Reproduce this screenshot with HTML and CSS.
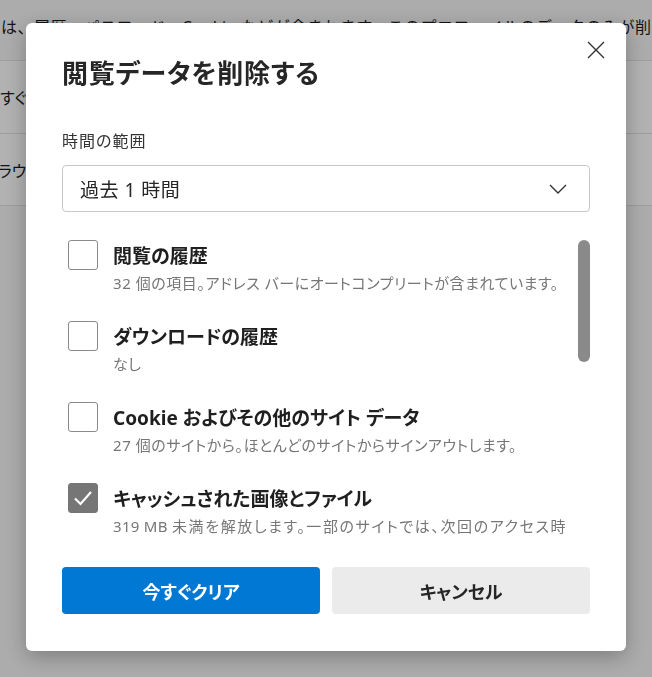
FILE: index.html
```html
<!DOCTYPE html>
<html lang="ja">
<head>
<meta charset="utf-8">
<title>閲覧データを削除する</title>
<link rel="stylesheet" href="styles.css">
</head>
<body>
<div class="page">
  <p class="intro">は、履歴、パスワード、Cookie などが含まれます。このプロファイルのデータのみが削除されます。</p>
  <div class="card">
    <div class="card-row"><span class="row-text">今すぐクリアするデータを選択</span></div>
    <div class="card-row"><span class="row-text">ブラウザーを閉じるたびにクリアするデータを選択</span></div>
  </div>
</div>
<div class="overlay"></div>
<div class="dialog" role="dialog">
  <div class="dlg-header">
    <h1 class="dlg-title">閲覧データを削除する</h1>
    <button class="close-btn" aria-label="閉じる">
      <svg width="18" height="18" viewBox="0 0 18 18"><path d="M1 1 L17 17 M17 1 L1 17" stroke="#333" stroke-width="1.4" fill="none"/></svg>
    </button>
  </div>
  <div class="field-label">時間の範囲</div>
  <div class="select">
    <span>過去 1 時間</span>
    <svg width="18" height="10" viewBox="0 0 18 10"><path d="M1 1 L9 9 L17 1" stroke="#333" stroke-width="1.4" fill="none"/></svg>
  </div>
  <div class="list-wrap">
    <div class="list">
      <div class="item">
        <span class="box"></span>
        <div class="texts">
          <div class="item-title">閲覧の履歴</div>
          <div class="item-desc">32 個の項目。アドレス バーにオートコンプリートが含まれています。</div>
        </div>
      </div>
      <div class="item">
        <span class="box"></span>
        <div class="texts">
          <div class="item-title">ダウンロードの履歴</div>
          <div class="item-desc">なし</div>
        </div>
      </div>
      <div class="item">
        <span class="box"></span>
        <div class="texts">
          <div class="item-title">Cookie およびその他のサイト データ</div>
          <div class="item-desc">27 個のサイトから。ほとんどのサイトからサインアウトします。</div>
        </div>
      </div>
      <div class="item">
        <span class="box checked"><svg width="20" height="16" viewBox="0 0 20 16"><path d="M2 8.5 L7.5 14 L18 2" stroke="#fff" stroke-width="2.2" fill="none"/></svg></span>
        <div class="texts">
          <div class="item-title">キャッシュされた画像とファイル</div>
          <div class="item-desc desc-wide"><span class="latin">319 MB </span>未満を解放します。一部のサイトでは、次回のアクセス時に読み込みが遅くなる可能性があります。</div>
        </div>
      </div>
      <div class="item">
        <span class="box"></span>
        <div class="texts">
          <div class="item-title">パスワード</div>
          <div class="item-desc">なし</div>
        </div>
      </div>
    </div>
    <div class="scroll-track"><div class="scroll-thumb"></div></div>
  </div>
  <div class="actions">
    <button class="btn primary">今すぐクリア</button>
    <button class="btn secondary">キャンセル</button>
  </div>
</div>
</body>
</html>
```
FILE: styles.css
```css
* { box-sizing: border-box; }
html, body {
  margin: 0;
  height: 677px;
  overflow: hidden;
}
body {
  background: #f7f7f7;
  font-family: "Noto Sans", "Noto Sans CJK JP", sans-serif;
  font-feature-settings: "palt";
  color: #262626;
}
.page {
  padding-top: 15px;
  overflow: hidden;
}
.intro {
  margin: 0;
  padding-left: 1px;
  font-size: 16px;
  line-height: 24px;
  letter-spacing: 0.5px;
  white-space: nowrap;
  overflow: hidden;
  font-feature-settings: normal;
  color: #1b1b1b;
}
.card {
  margin-top: 21px;
  margin-left: -20px;
  background: #fff;
  border-top: 1px solid #e3e3e3;
  border-bottom: 1px solid #e3e3e3;
}
.card-row {
  height: 72px;
  display: flex;
  align-items: center;
  padding-left: 4px;
  font-size: 16px;
  white-space: nowrap;
  color: #1b1b1b;
}
.card-row + .card-row { border-top: 1px solid #e3e3e3; }

.overlay {
  position: fixed;
  inset: 0;
  background: rgba(0, 0, 0, 0.3);
}
.dialog {
  position: fixed;
  left: 26px;
  top: 23px;
  width: 600px;
  padding: 32px 36px 37px 36px;
  background: #fff;
  border-radius: 6px;
  box-shadow: 0 6px 22px rgba(0, 0, 0, 0.28);
}
.dlg-header {
  display: flex;
  justify-content: space-between;
  align-items: flex-start;
}
.dlg-title {
  margin: 0;
  font-size: 26px;
  line-height: 36px;
  font-weight: 700;
  letter-spacing: 0.8px;
  color: #262626;
}
.close-btn {
  width: 32px;
  height: 32px;
  margin: -21px -22px 0 0;
  padding: 0;
  border: none;
  background: transparent;
  display: flex;
  align-items: center;
  justify-content: center;
}
.field-label {
  margin-top: 38px;
  font-size: 16px;
  line-height: 24px;
  letter-spacing: 1px;
  color: #333;
}
.select {
  margin-top: 12px;
  height: 47px;
  border: 1px solid #c8c8c8;
  border-radius: 4px;
  display: flex;
  align-items: center;
  justify-content: space-between;
  padding: 0 22px 0 17px;
  font-size: 19px;
  letter-spacing: 0.5px;
  color: #262626;
}
.list-wrap {
  margin-top: 12px;
  height: 315px;
  display: flex;
  overflow: hidden;
}
.list {
  flex: 1;
  min-width: 0;
  padding: 16px 0 0 6px;
  display: flex;
  flex-direction: column;
  gap: 27px;
  overflow: hidden;
}
.item {
  display: flex;
  gap: 15px;
  align-items: flex-start;
}
.box {
  flex: none;
  width: 30px;
  height: 30px;
  border: 1px solid #8a8a8a;
  border-radius: 3px;
  background: #fff;
  display: flex;
  align-items: center;
  justify-content: center;
}
.box.checked {
  background: #767676;
  border-color: #767676;
}
.texts { min-width: 0; }
.item-title {
  font-size: 19px;
  line-height: 32px;
  font-weight: 700;
  color: #1f1f1f;
}
.item-desc {
  font-size: 15px;
  line-height: 22px;
  letter-spacing: 0.55px;
  color: #767676;
}
.item-desc.desc-wide {
  letter-spacing: 1.6px;
}
.item-desc .latin {
  letter-spacing: 0.3px;
}
.scroll-track {
  flex: none;
  width: 12px;
  padding-top: 16px;
}
.scroll-thumb {
  height: 122px;
  background: #8a8a8a;
  border-radius: 6px;
}
.actions {
  margin-top: 28px;
  display: grid;
  grid-template-columns: 1fr 1fr;
  gap: 12px;
}
.btn {
  height: 47px;
  border: none;
  border-radius: 4px;
  font-family: inherit;
  font-feature-settings: "palt";
  font-size: 18px;
  font-weight: 700;
}
.btn.primary {
  background: #0078d4;
  color: #fff;
}
.btn.secondary {
  background: #ebebeb;
  color: #262626;
}
```
